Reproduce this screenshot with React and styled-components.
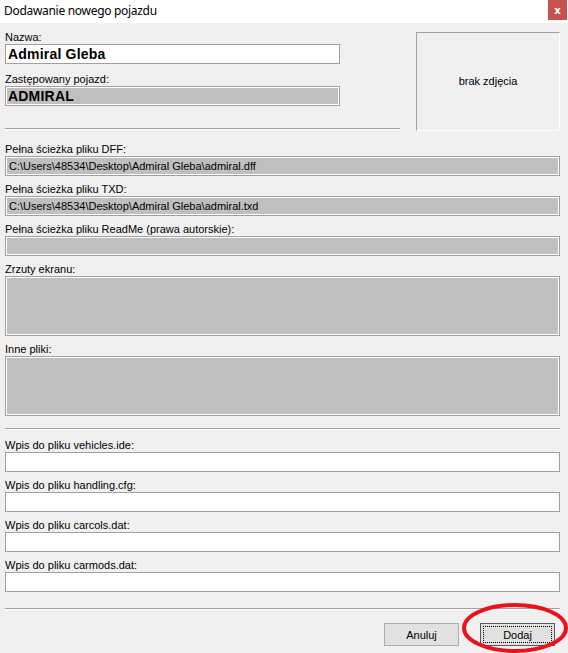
import React from 'react';
import styled, { createGlobalStyle } from 'styled-components';

const GlobalStyle = createGlobalStyle`
html, body {
  margin: 0;
  padding: 0;
  background: #f0f0f0;
}
body {
  font-family: "Liberation Sans", Arial, sans-serif;
}
`

const Window = styled.div`
position: relative;
width: 568px;
height: 653px;
background: #f0f0f0;
overflow: hidden;
box-sizing: border-box;
display: flex;
flex-direction: column;
`

const TitleBar = styled.div`
height: 23px;
background: #fff;
display: flex;
align-items: flex-start;
flex-shrink: 0;
`

const Title = styled.div`
padding-left: 4px;
line-height: 22px;
font-family: "Noto Sans", "Open Sans", sans-serif;
font-size: 12px;
letter-spacing: -0.3px;
color: #000;
`

const CloseButton = styled.div`
margin-left: auto;
margin-right: 1px;
width: 19px;
height: 20px;
background: #c75050;
color: #fff;
font-family: "DejaVu Sans", sans-serif;
font-weight: bold;
font-size: 10px;
display: flex;
align-items: center;
justify-content: center;
`

const Content = styled.div`
padding: 0 8px 0 5px;
border-left: 1px solid #e2e2e2;
margin-left: -1px;
`

const TopSection = styled.div`
display: flex;
align-items: flex-start;
`

const LeftCol = styled.div`
width: 395px;
padding-top: 8px;
`

const FieldCol = styled.div`
width: 335px;
`

const PhotoBox = styled.div`
margin-left: 16px;
margin-top: 9px;
width: 144px;
height: 99px;
box-sizing: border-box;
border-top: 1px solid #a0a0a0;
border-left: 1px solid #a0a0a0;
border-right: 1px solid #fff;
border-bottom: 1px solid #fff;
display: flex;
align-items: center;
justify-content: center;
font-size: 11px;
padding-bottom: 2px;
`

const Label = styled.div`
margin-top: ${p => p.$mt || 0}px;
height: 13px;
line-height: 13px;
font-size: 11px;
color: #000;
white-space: nowrap;
`

const Box = styled.div`
height: ${p => p.$h || 20}px;
box-sizing: border-box;
border: 1px solid #a0a0a0;
background: ${p => (p.$gray ? '#bfbfbf' : '#fff')};
box-shadow: ${p => (p.$gray ? 'inset 0 0 0 1px #fff' : 'none')};
padding-left: ${p => (p.$big ? 2 : 3)}px;
display: flex;
align-items: center;
font-size: ${p => (p.$big ? 14 : 11)}px;
font-weight: ${p => (p.$big ? 'bold' : 'normal')};
letter-spacing: ${p => (p.$big ? 0.2 : 0)}px;
color: #000;
white-space: nowrap;
overflow: hidden;
`

const Separator = styled.div`
margin-top: ${p => p.$mt || 0}px;
border-top: 1px solid #a0a0a0;
border-bottom: 1px solid #fff;
`

const Footer = styled.div`
margin-top: 13px;
display: flex;
justify-content: flex-end;
gap: 21px;
padding-right: 5px;
`

const Button = styled.div`
position: relative;
width: 75px;
height: 23px;
box-sizing: border-box;
background: #e1e1e1;
border: 1px solid ${p => (p.$default ? '#5a5a5a' : '#adadad')};
display: flex;
align-items: center;
justify-content: center;
font-size: 11px;
color: #000;
padding-top: 1px;

${p => p.$default && `
  &::after {
    content: '';
    position: absolute;
    inset: 2px;
    border: 1px dotted #000;
  }
`}
`

const Annotation = styled.svg`
position: absolute;
left: 458px;
top: 598px;
width: 110px;
height: 56px;
pointer-events: none;
`

const Field = ({ label, mt, value, gray, big, h }) => (
    <>
        <Label $mt={mt}>{label}</Label>
        <Box $gray={gray} $big={big} $h={h}>{value}</Box>
    </>
)

const App = () => {
    return (
        <>
            <GlobalStyle />
            <Window>
                <TitleBar>
                    <Title>Dodawanie nowego pojazdu</Title>
                    <CloseButton>x</CloseButton>
                </TitleBar>
                <Content>
                    <TopSection>
                        <LeftCol>
                            <FieldCol>
                                <Field label="Nazwa:" value="Admiral Gleba" big />
                                <Field label="Zastępowany pojazd:" mt={9} value="ADMIRAL" gray big />
                            </FieldCol>
                            <Separator $mt={22} />
                        </LeftCol>
                        <PhotoBox>brak zdjęcia</PhotoBox>
                    </TopSection>

                    <Field label="Pełna ścieżka pliku DFF:" mt={12} gray
                        value={'C:\\Users\\48534\\Desktop\\Admiral Gleba\\admiral.dff'} />
                    <Field label="Pełna ścieżka pliku TXD:" mt={7} gray
                        value={'C:\\Users\\48534\\Desktop\\Admiral Gleba\\admiral.txd'} />
                    <Field label="Pełna ścieżka pliku ReadMe (prawa autorskie):" mt={7} gray />
                    <Field label="Zrzuty ekranu:" mt={7} gray h={60} />
                    <Field label="Inne pliki:" mt={7} gray h={60} />

                    <Separator $mt={12} />

                    <Field label="Wpis do pliku vehicles.ide:" mt={9} />
                    <Field label="Wpis do pliku handling.cfg:" mt={7} />
                    <Field label="Wpis do pliku carcols.dat:" mt={7} />
                    <Field label="Wpis do pliku carmods.dat:" mt={7} />

                    <Separator $mt={16} />

                    <Footer>
                        <Button>Anuluj</Button>
                        <Button $default>Dodaj</Button>
                    </Footer>
                </Content>
                <Annotation viewBox="0 0 110 56">
                    <ellipse cx="57" cy="30" rx="51" ry="23" fill="none" stroke="#e8141c" strokeWidth="4" />
                </Annotation>
            </Window>
        </>
    );
}

export default App;
